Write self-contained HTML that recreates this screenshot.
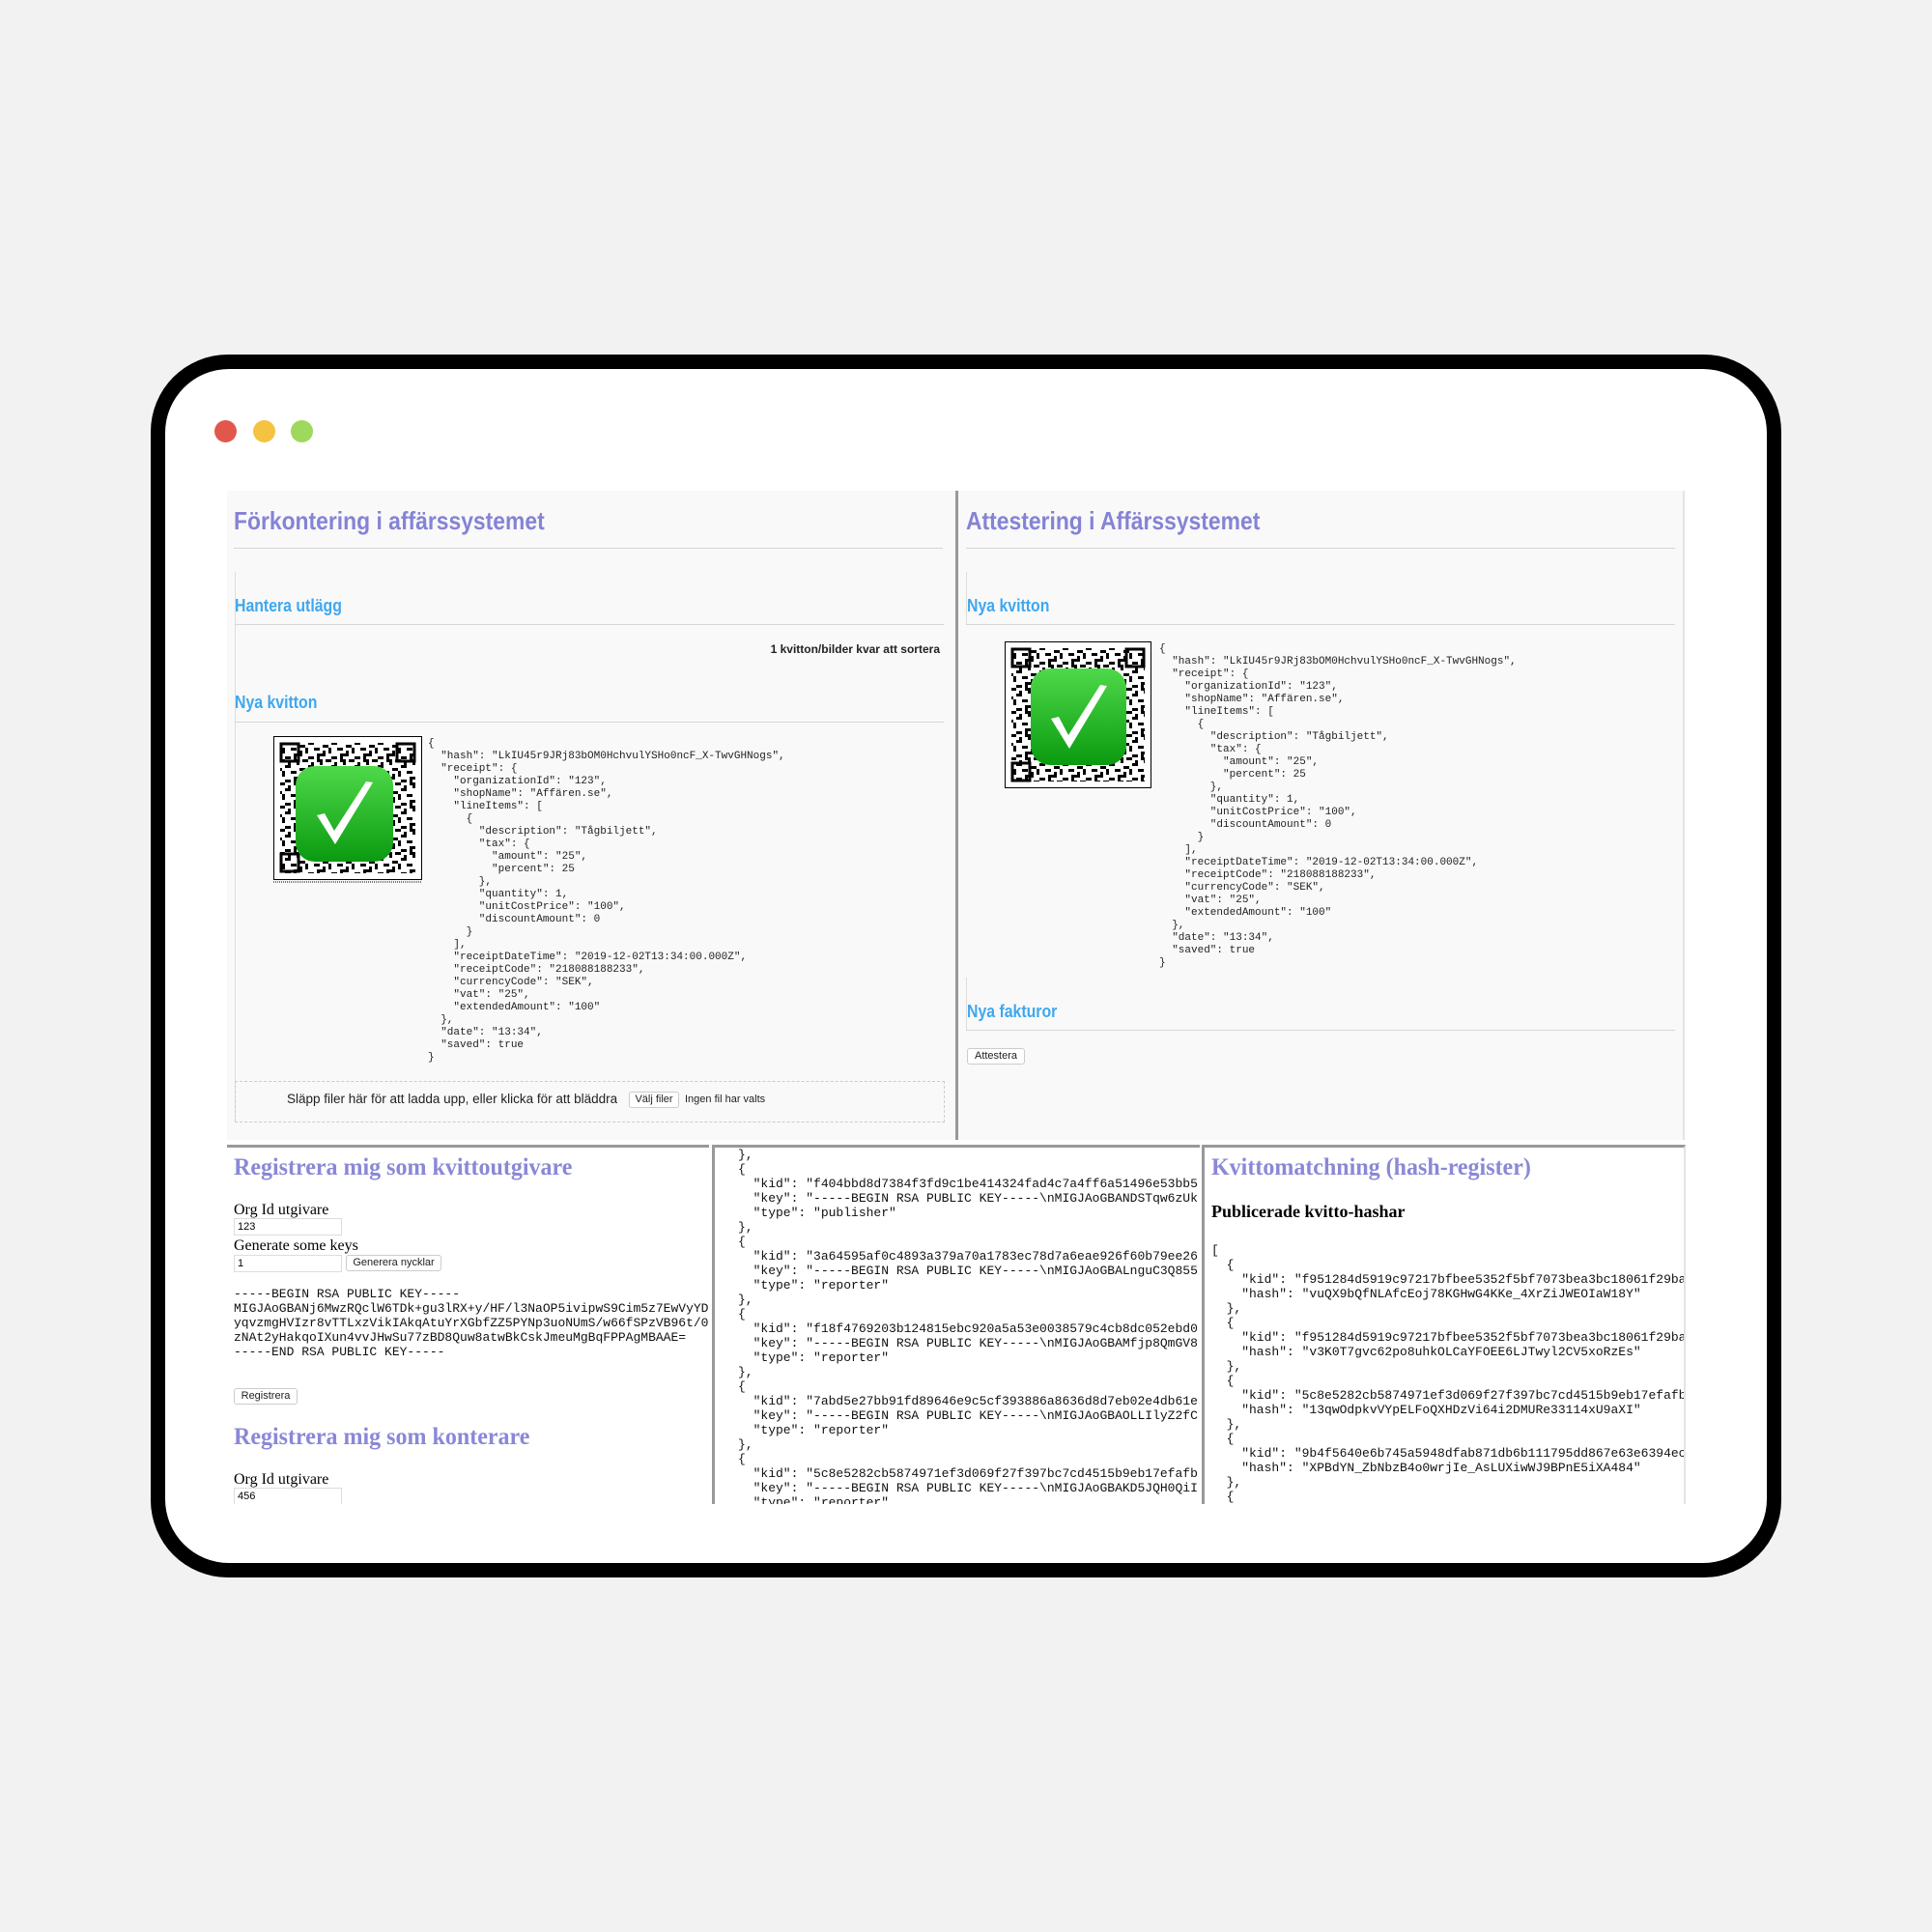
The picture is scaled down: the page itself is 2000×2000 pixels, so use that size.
<!DOCTYPE html>
<html><head><meta charset="utf-8">
<style>
*{margin:0;padding:0;box-sizing:border-box}
body{width:2000px;height:2000px;background:#f2f2f2;position:relative;overflow:hidden;font-family:"Liberation Sans",sans-serif}
.abs{position:absolute}
.frame{left:156px;top:367px;width:1688px;height:1266px;background:#000;border-radius:80px}
.inner{left:171px;top:382px;width:1658px;height:1236px;background:#fff;border-radius:66px}
.dot{width:23px;height:23px;border-radius:50%}
.h1{font-weight:bold;font-size:26px;color:#8583d6;white-space:nowrap;transform:scaleX(0.88);transform-origin:0 0}
.h3{font-weight:bold;font-size:18px;color:#3ea7ef;white-space:nowrap;transform:scaleX(0.88);transform-origin:0 0}
.hr{height:1px;background:#d6d6d6}
pre{font-family:"Liberation Mono",monospace;white-space:pre;color:#222}
.js{font-size:11px;line-height:13px}
.jb{font-size:13px;line-height:15px;color:#111}
.serifh{font-family:"Liberation Serif",serif;font-weight:bold;font-size:25px;color:#8a88d6;white-space:nowrap;transform:scaleX(0.96);transform-origin:0 0}
.lbl{font-family:"Liberation Serif",serif;font-size:16px;color:#000}
.inp{border:1px solid #ddd;background:#fff;font-size:11px;padding-left:3px;line-height:16px;height:18px}
.btn{border:1px solid #ccc;border-radius:3px;background:#fff;font-size:11px;text-align:center;line-height:15px;height:17px;color:#222}
</style></head><body>
<div class="abs frame"></div>
<div class="abs inner"></div>
<div class="abs dot" style="left:222px;top:435px;background:#e2574c"></div>
<div class="abs dot" style="left:262px;top:435px;background:#f5c342"></div>
<div class="abs dot" style="left:301px;top:435px;background:#9ed85c"></div>

<svg width="0" height="0" style="position:absolute">
<defs>
<pattern id="qr" width="24" height="24" patternUnits="userSpaceOnUse">
<rect width="24" height="24" fill="#fff"/>
<rect x="0" y="0" width="3" height="6" fill="#000"/><rect x="6" y="0" width="6" height="3" fill="#000"/>
<rect x="15" y="3" width="3" height="6" fill="#000"/><rect x="3" y="9" width="6" height="3" fill="#000"/>
<rect x="18" y="12" width="6" height="3" fill="#000"/><rect x="9" y="12" width="3" height="6" fill="#000"/>
<rect x="0" y="18" width="6" height="3" fill="#000"/><rect x="12" y="21" width="6" height="3" fill="#000"/>
<rect x="21" y="0" width="3" height="3" fill="#000"/><rect x="3" y="15" width="3" height="3" fill="#000"/>
<rect x="21" y="18" width="3" height="6" fill="#000"/><rect x="12" y="6" width="3" height="3" fill="#000"/>
</pattern>
<linearGradient id="gg" x1="0" y1="0" x2="0" y2="1"><stop offset="0" stop-color="#4fd94a"/><stop offset="1" stop-color="#0a9a10"/></linearGradient>
</defs></svg>

<!-- top-left panel -->
<div class="abs" style="left:235px;top:508px;width:755px;height:672px;background:#f9f9f9"></div>
<div class="abs h1" style="left:242px;top:524px">Förkontering i affärssystemet</div>
<div class="abs hr" style="left:242px;top:567px;width:734px"></div>
<div class="abs" style="left:243px;top:592px;width:1px;height:570px;background:#ddd"></div>
<div class="abs h3" style="left:243px;top:617px">Hantera utlägg</div>
<div class="abs hr" style="left:243px;top:646px;width:734px"></div>
<div class="abs" style="left:700px;top:665px;width:273px;text-align:right;font-size:12px;font-weight:bold;color:#222">1 kvitton/bilder kvar att sortera</div>
<div class="abs h3" style="left:243px;top:717px">Nya kvitton</div>
<div class="abs hr" style="left:243px;top:747px;width:734px"></div>

<svg class="abs" style="left:283px;top:762px" width="154" height="152">
<rect x="0.5" y="0.5" width="153" height="148" fill="#fff" stroke="#000"/>
<rect x="7" y="7" width="140" height="135" fill="url(#qr)"/>
<rect x="8" y="8" width="18" height="18" fill="none" stroke="#000" stroke-width="3"/>
<rect x="128" y="8" width="18" height="18" fill="none" stroke="#000" stroke-width="3"/>
<rect x="8" y="122" width="18" height="18" fill="none" stroke="#000" stroke-width="3"/>
<rect x="23" y="31" width="101" height="99" rx="20" fill="url(#gg)"/>
<path d="M45 82 L64 112 L103 48 L96 47 L63 98 L53 80 Z" fill="#fff"/>
<line x1="0" y1="151" x2="154" y2="151" stroke="#000" stroke-dasharray="1 1"/>
</svg>
<pre class="abs js" style="left:443px;top:764px">{
  "hash": "LkIU45r9JRj83bOM0HchvulYSHo0ncF_X-TwvGHNogs",
  "receipt": {
    "organizationId": "123",
    "shopName": "Affären.se",
    "lineItems": [
      {
        "description": "Tågbiljett",
        "tax": {
          "amount": "25",
          "percent": 25
        },
        "quantity": 1,
        "unitCostPrice": "100",
        "discountAmount": 0
      }
    ],
    "receiptDateTime": "2019-12-02T13:34:00.000Z",
    "receiptCode": "218088188233",
    "currencyCode": "SEK",
    "vat": "25",
    "extendedAmount": "100"
  },
  "date": "13:34",
  "saved": true
}</pre>
<div class="abs" style="left:243px;top:1119px;width:735px;height:43px;border:1px dashed #ccc"></div>
<div class="abs" style="left:297px;top:1130px;font-size:13.5px;color:#222;white-space:nowrap">Släpp filer här för att ladda upp, eller klicka för att bläddra</div>
<div class="abs btn" style="left:651px;top:1130px;width:52px">Välj filer</div>
<div class="abs" style="left:709px;top:1132px;font-size:11px;color:#222;white-space:nowrap">Ingen fil har valts</div>

<!-- divider -->
<div class="abs" style="left:989px;top:508px;width:3px;height:672px;background:#999"></div>

<!-- top-right panel -->
<div class="abs" style="left:992px;top:508px;width:752px;height:672px;background:#f9f9f9;border-right:2px solid #e4e4e4"></div>
<div class="abs h1" style="left:1000px;top:524px">Attestering i Affärssystemet</div>
<div class="abs hr" style="left:1000px;top:567px;width:734px"></div>
<div class="abs" style="left:1000px;top:592px;width:1px;height:55px;background:#ddd"></div>
<div class="abs h3" style="left:1001px;top:617px">Nya kvitton</div>
<div class="abs hr" style="left:1000px;top:646px;width:734px"></div>
<svg class="abs" style="left:1040px;top:664px" width="152" height="152">
<rect x="0.5" y="0.5" width="151" height="151" fill="#fff" stroke="#000"/>
<rect x="7" y="7" width="138" height="138" fill="url(#qr)"/>
<rect x="8" y="8" width="18" height="18" fill="none" stroke="#000" stroke-width="3"/>
<rect x="126" y="8" width="18" height="18" fill="none" stroke="#000" stroke-width="3"/>
<rect x="8" y="126" width="18" height="18" fill="none" stroke="#000" stroke-width="3"/>
<rect x="27" y="28" width="99" height="100" rx="20" fill="url(#gg)"/>
<path d="M48 80 L67 111 L106 46 L99 45 L66 97 L56 78 Z" fill="#fff"/>
</svg>
<pre class="abs js" style="left:1200px;top:666px">{
  "hash": "LkIU45r9JRj83bOM0HchvulYSHo0ncF_X-TwvGHNogs",
  "receipt": {
    "organizationId": "123",
    "shopName": "Affären.se",
    "lineItems": [
      {
        "description": "Tågbiljett",
        "tax": {
          "amount": "25",
          "percent": 25
        },
        "quantity": 1,
        "unitCostPrice": "100",
        "discountAmount": 0
      }
    ],
    "receiptDateTime": "2019-12-02T13:34:00.000Z",
    "receiptCode": "218088188233",
    "currencyCode": "SEK",
    "vat": "25",
    "extendedAmount": "100"
  },
  "date": "13:34",
  "saved": true
}</pre>
<div class="abs" style="left:1000px;top:1012px;width:1px;height:55px;background:#ddd"></div>
<div class="abs h3" style="left:1001px;top:1037px">Nya fakturor</div>
<div class="abs hr" style="left:1000px;top:1066px;width:734px"></div>
<div class="abs btn" style="left:1001px;top:1085px;width:60px">Attestera</div>

<!-- bottom row -->
<div class="abs" style="left:235px;top:1185px;width:499px;height:372px;border-top:3px solid #999;overflow:hidden;background:#fff">
 <div class="abs serifh" style="left:7px;top:7px">Registrera mig som kvittoutgivare</div>
 <div class="abs lbl" style="left:7px;top:56px">Org Id utgivare</div>
 <div class="abs inp" style="left:7px;top:73px;width:112px">123</div>
 <div class="abs lbl" style="left:7px;top:93px">Generate some keys</div>
 <div class="abs inp" style="left:7px;top:111px;width:112px">1</div>
 <div class="abs btn" style="left:123px;top:111px;width:99px">Generera nycklar</div>
 <pre class="abs jb" style="left:7px;top:144px">-----BEGIN RSA PUBLIC KEY-----
MIGJAoGBANj6MwzRQclW6TDk+gu3lRX+y/HF/l3NaOP5ivipwS9Cim5z7EwVyYD
yqvzmgHVIzr8vTTLxzVikIAkqAtuYrXGbfZZ5PYNp3uoNUmS/w66fSPzVB96t/0
zNAt2yHakqoIXun4vvJHwSu77zBD8Quw8atwBkCskJmeuMgBqFPPAgMBAAE=
-----END RSA PUBLIC KEY-----</pre>
 <div class="abs btn" style="left:7px;top:249px;width:66px">Registrera</div>
 <div class="abs serifh" style="left:7px;top:286px">Registrera mig som konterare</div>
 <div class="abs lbl" style="left:7px;top:335px">Org Id utgivare</div>
 <div class="abs inp" style="left:7px;top:352px;width:112px">456</div>
</div>

<div class="abs" style="left:737px;top:1185px;width:505px;height:372px;border-top:3px solid #999;border-left:3px solid #999;overflow:hidden;background:#fff">
<pre class="abs jb" style="left:24px;top:0px">},
{
  "kid": "f404bbd8d7384f3fd9c1be414324fad4c7a4ff6a51496e53bb5
  "key": "-----BEGIN RSA PUBLIC KEY-----\nMIGJAoGBANDSTqw6zUk
  "type": "publisher"
},
{
  "kid": "3a64595af0c4893a379a70a1783ec78d7a6eae926f60b79ee26
  "key": "-----BEGIN RSA PUBLIC KEY-----\nMIGJAoGBALnguC3Q855
  "type": "reporter"
},
{
  "kid": "f18f4769203b124815ebc920a5a53e0038579c4cb8dc052ebd0
  "key": "-----BEGIN RSA PUBLIC KEY-----\nMIGJAoGBAMfjp8QmGV8
  "type": "reporter"
},
{
  "kid": "7abd5e27bb91fd89646e9c5cf393886a8636d8d7eb02e4db61e
  "key": "-----BEGIN RSA PUBLIC KEY-----\nMIGJAoGBAOLLIlyZ2fC
  "type": "reporter"
},
{
  "kid": "5c8e5282cb5874971ef3d069f27f397bc7cd4515b9eb17efafb
  "key": "-----BEGIN RSA PUBLIC KEY-----\nMIGJAoGBAKD5JQH0QiI
  "type": "reporter"</pre>
</div>

<div class="abs" style="left:1244px;top:1185px;width:501px;height:372px;border-top:3px solid #999;border-left:3px solid #999;border-right:2px solid #e4e4e4;overflow:hidden;background:#fff">
 <div class="abs serifh" style="left:7px;top:7px">Kvittomatchning (hash-register)</div>
 <div class="abs" style="left:7px;top:56px;font-family:'Liberation Serif',serif;font-weight:bold;font-size:18px;color:#000;white-space:nowrap">Publicerade kvitto-hashar</div>
<pre class="abs jb" style="left:7px;top:99px">[
  {
    "kid": "f951284d5919c97217bfbee5352f5bf7073bea3bc18061f29ba
    "hash": "vuQX9bQfNLAfcEoj78KGHwG4KKe_4XrZiJWEOIaW18Y"
  },
  {
    "kid": "f951284d5919c97217bfbee5352f5bf7073bea3bc18061f29ba
    "hash": "v3K0T7gvc62po8uhkOLCaYFOEE6LJTwyl2CV5xoRzEs"
  },
  {
    "kid": "5c8e5282cb5874971ef3d069f27f397bc7cd4515b9eb17efafb
    "hash": "13qwOdpkvVYpELFoQXHDzVi64i2DMURe33114xU9aXI"
  },
  {
    "kid": "9b4f5640e6b745a5948dfab871db6b111795dd867e63e6394ec
    "hash": "XPBdYN_ZbNbzB4o0wrjIe_AsLUXiwWJ9BPnE5iXA484"
  },
  {</pre>
</div>
</body></html>
